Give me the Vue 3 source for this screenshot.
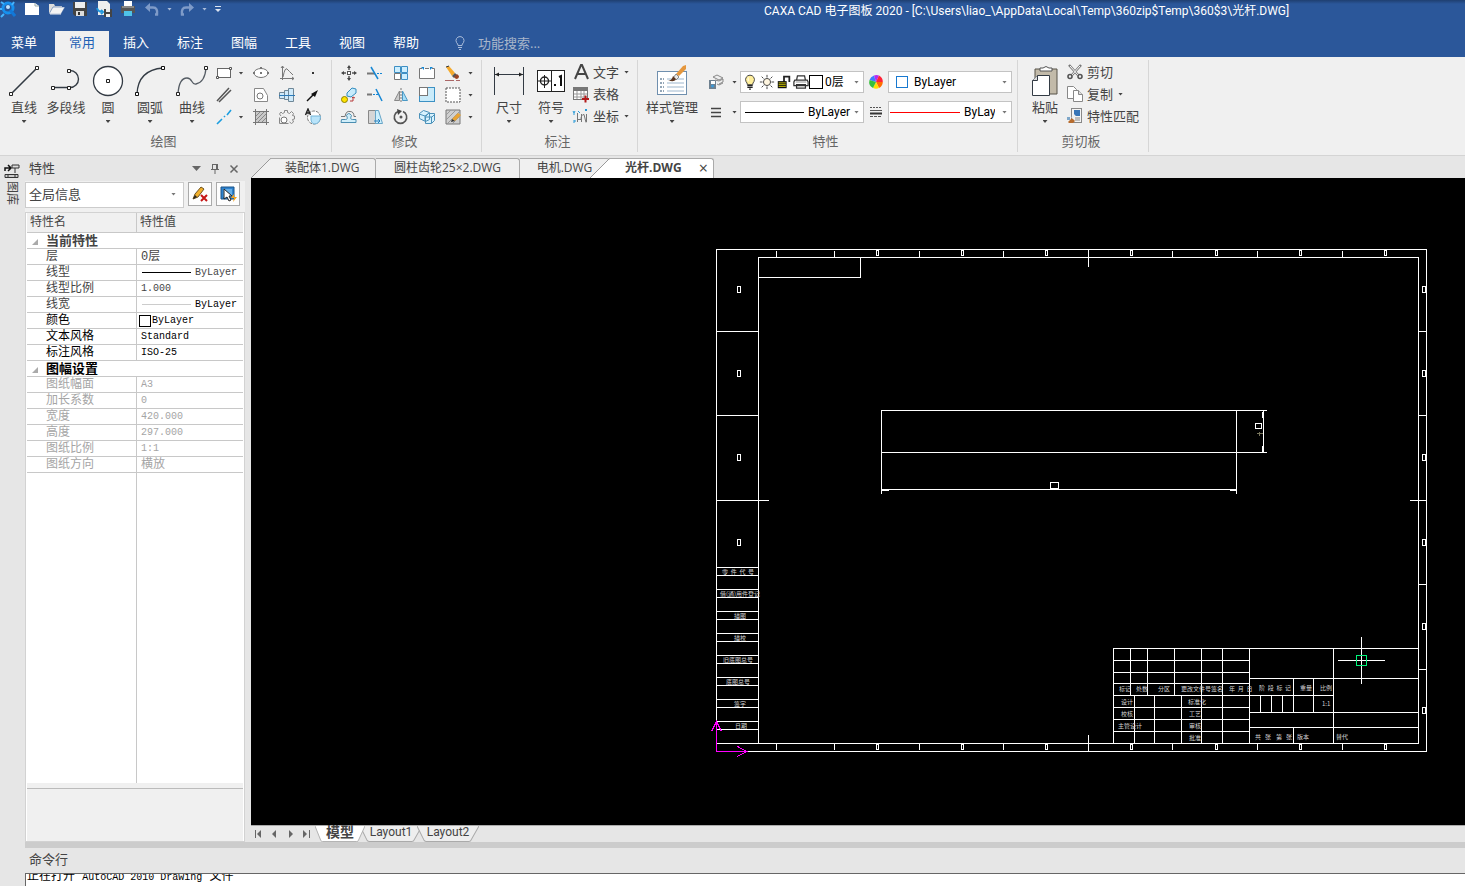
<script setup>
import { ref } from 'vue'

const icons = {
  logo: '<circle cx="8" cy="8" r="5" fill="none" stroke="#1690ee" stroke-width="3"/><path d="M1 2l3 2M14 2l-2 3M2 9H0M4 14l-3 3" stroke="#45b4ff" stroke-width="2"/><path d="M10 10l5 6" stroke="#1278d8" stroke-width="3"/><circle cx="8" cy="7" r="2" fill="#bfe3ff"/>',
  newdoc: '<path d="M2 3h10l4 3v9H2z" fill="#fff"/><path d="M12 3v3h4" fill="none" stroke="#9aa"/>',
  open: '<path d="M2 14V4h5l1 2h7v2" fill="#ddd"/><path d="M2 14l4-7h12l-4 7z" fill="#f3f3f3" stroke="#2b579a" stroke-width=".5"/><path d="M3 14h11" stroke="#eee"/>',
  save: '<path d="M2 2h14v14H4l-2-2z" fill="#444"/><rect x="4" y="2" width="10" height="6" fill="#eee"/><path d="M5 16v-5h8v5" fill="#ddd"/><rect x="7" y="12" width="2" height="3" fill="#333"/>',
  saveas: '<path d="M3 1h9l3 3v11H3z" fill="#eee"/><path d="M2 8q1 4 6 4m-2-2l2 2-2 2" stroke="#2196dd" stroke-width="2" fill="none"/><path d="M9 9h8v8H9z" fill="#444"/><path d="M11 9h4v3h-4zM11 14h4v3h-4z" fill="#eee"/>',
  print: '<path d="M5 1h8v5H5z" fill="#fff"/><rect x="2" y="6" width="14" height="7" fill="#555"/><path d="M5 11h8v5H5z" fill="#4fc3e8"/><path d="M3 7h12" stroke="#bbb"/>',
  undo: '<path d="M7 3L2 7.500 7 12z" fill="#7f9bc8"/><path d="M5 7.500h5q5 0 4 7h-2" fill="none" stroke="#7f9bc8" stroke-width="2.500"/>',
  redo: '<path d="M11 3l5 4.500L11 12z" fill="#7f9bc8"/><path d="M13 7.500H8q-5 0-4 7h2" fill="none" stroke="#7f9bc8" stroke-width="2.500"/>',
  rect: '<rect x="2.5" y="4.500" width="13" height="9" fill="#fff" stroke="#666"/><path d="M1.500 12.500h2v2h-2zM14.500 3.500h2v2h-2z" fill="#fff" stroke="#555"/>',
  ellipse: '<ellipse cx="9" cy="9" rx="7" ry="4.500" fill="#fff" stroke="#777"/><path d="M1 8h2v2H1zM15 8h2v2h-2zM8 3h2v2H8zM8 8h2v2H8z" fill="#777"/>',
  curve: '<path d="M4.500 2v14M2 14.500h14" stroke="#777" fill="none"/><path d="M5 13Q7 3 9 5t6 6" stroke="#777" fill="none"/><path d="M3 4l1.500-2L6 4M14 13l2 1.500-2 1.500" fill="none" stroke="#777"/>',
  point: '<rect x="8" y="8" width="2" height="2" fill="#333"/>',
  parallel: '<path d="M2 15L14 2M4 16L16 4" stroke="#555" stroke-width="1.5"/>',
  poly: '<path d="M2.500 2.500h9l4 7v6h-13z" fill="#fff" stroke="#888"/><circle cx="8" cy="10" r="3" fill="#fff" stroke="#777"/>',
  shaft: '<path d="M1.500 6.500h5v6h-5zM6.500 4.500h4v9h-4zM10.500 2.500h5v13h-5z" fill="#cfeafa" stroke="#6f8797"/><path d="M1 9.500h16" stroke="#2a79b8"/>',
  leader: '<path d="M3 15l7-7" stroke="#111" stroke-width="1.5"/><path d="M14 4L7 8l4 3z" fill="#111"/>',
  axis: '<path d="M2 16l5-5M9 9l1-1M12 7l4-5" stroke="#1c9ee0" stroke-width="1.6"/>',
  hatch: '<path d="M3.500 1v16M14.500 1v16M1 3.500h16M1 14.500h16" stroke="#777"/><rect x="4" y="4" width="10" height="10" fill="#c9c9c9"/><path d="M4 8l4-4M4 12l8-8M6 14l8-8M10 14l4-4" stroke="#888"/>',
  gear: '<path d="M4.500 5.500l2-1V2.500h3v2l2 1 2-2 2 2-1 2 2 .5v3l-2 .5 1 2.500-2 1.500-2-1.500" fill="none" stroke="#888"/><path d="M4.500 5.500L3 4 1.500 6l1.500 2M1.500 9.500v6h9" fill="none" stroke="#888"/><circle cx="6" cy="12" r="3" fill="#fff" stroke="#777"/>',
  acircle: '<circle cx="10" cy="9.500" r="6.500" fill="#fff" stroke="#777" stroke-dasharray="3 1"/><path d="M7 8h9.500q0 8-6.500 8-3-1-3-4z" fill="#b9e4fa" stroke="#77b6d8"/><path d="M1.500 7L4 1l2.500 6M2.500 5h3" fill="none" stroke="#222" stroke-width="1.400"/>',
  move: '<path d="M9 3v3M9 12v3M3 9h3M12 9h3" stroke="#555" stroke-width="1.5"/><path d="M7 4l2-3 2 3zM7 14l2 3 2-3zM4 7L1 9l3 2zM14 7l3 2-3 2z" fill="#444"/><rect x="7.500" y="7.500" width="3" height="3" fill="#fff" stroke="#555"/>',
  trim: '<path d="M1 9.500h8" stroke="#777" stroke-width="2"/><path d="M5 3l7 12" stroke="#1687d4" stroke-width="1.5"/><path d="M11 9.500h6" stroke="#1687d4" stroke-dasharray="2 1"/>',
  array: '<path d="M2.500 2.500h6v6h-6zM9.500 2.500h6v6h-6zM9.500 9.500h6v6h-6z" fill="#cdeefe" stroke="#3d8fc4"/><path d="M2.500 9.500h6v6h-6z" fill="#fff" stroke="#777"/>',
  breakit: '<path d="M4 4.500H1.500v10h15v-10H14M7 4.500h4" fill="#fff" stroke="#777"/><path d="M3 3h3v3zM15 3h-3v3z" fill="#1687d4"/>',
  erase: '<path d="M2 3l3-1 6 7-3 3z" fill="#f5aa2d"/><path d="M2 3l3-1" stroke="#333"/><path d="M8 12l3-3 2 2-3 3z" fill="#555"/><path d="M10 13l3-3 2 2q0 3-3 3z" fill="#9b4423"/><path d="M1 16.500h9M12 16.500h4" stroke="#a66"/>',
  copyobj: '<path d="M7 7l5-5 4 1v4l-5 4-4-1z" fill="#c7ebfb" stroke="#328dc0"/><circle cx="4.500" cy="13.500" r="3" fill="#ffe300" stroke="#8d8100"/><path d="M10 15h3v-4m-1 1l1-1 2 1" fill="none" stroke="#b53737"/>',
  extend: '<path d="M1 8.500h5" stroke="#777" stroke-width="2"/><path d="M7 8.500h5" stroke="#1687d4" stroke-dasharray="2 1"/><path d="M10 3l6 12" stroke="#1687d4" stroke-width="1.500"/>',
  mirror: '<path d="M7.500 5v9.500h-5z" fill="#ccc" stroke="#888"/><path d="M10.500 5v9.500h5z" fill="#a7def8" stroke="#4998c5"/><path d="M9 2v14" stroke="#777" stroke-dasharray="2 1"/>',
  scale: '<rect x="1.500" y="1.500" width="15" height="14" fill="#c9ebfa" stroke="#3c91c4"/><rect x="1.500" y="1.500" width="8" height="8" fill="#fff" stroke="#777"/>',
  selrect: '<rect x="2" y="2" width="14" height="14" fill="#fff" stroke="#555" stroke-dasharray="2 1"/>',
  offset: '<path d="M1.500 11.500h4q3 0 1-4 2-4 5 0-2 4 1 4h3.500v3h-15z" fill="#d0eefa" stroke="#4b8eb1"/><path d="M1 8.500h4q1-6 5-5 4 0 4 5h2" fill="none" stroke="#777"/>',
  stretch: '<path d="M2.500 2.500h8v13h-8z" fill="#d6d6d6" stroke="#888"/><path d="M9.500 2.500h3l4 13h-7z" fill="#cceffd" stroke="#68a5c7"/><path d="M8 13h6m-2-2l2 2-2 2" fill="none" stroke="#287fbd"/>',
  rotate: '<path d="M6 3.500a6.200 6.200 0 1 0 5 0" fill="none" stroke="#555" stroke-width="1.6"/><path d="M5 1l5 2-4 4z" fill="#444"/><circle cx="9" cy="9" r="1.500" fill="#555"/>',
  blocks: '<path d="M1.500 5.500l4-3 6 2v7l-4 2-6-3zM7.500 8.500l3-3h6v7l-3 3h-6z" fill="#d8f2fd" stroke="#4b91b9"/><path d="M1 6l6 2 4-3M7 8v5M8 9h6l3-3M13.500 9v6" fill="none" stroke="#4b91b9"/>',
  edith: '<path d="M2 2h14v14H2z" fill="#cfcfcf" stroke="#777"/><path d="M2 7l5-5M2 12L12 2M3 16L16 3M8 16l8-8" stroke="#999"/><path d="M8 11l6-6 3 2-6 6z" fill="#e8a333"/><path d="M7 14l1-3 3 2z" fill="#333"/>',
  A: '<path d="M3 16L9 2h1l6 14M5 11h9" fill="none" stroke="#444" stroke-width="2"/>',
  table: '<rect x="1.500" y="2.500" width="14" height="12" fill="#fff" stroke="#777"/><rect x="1" y="2" width="15" height="4" fill="#777"/><path d="M2 9h13M2 12h13M5 6v8M9 6v8M12 6v8" stroke="#999"/><path d="M10 14h7M13.500 10.500v7" stroke="#b21b1b" stroke-width="2"/>',
  coord: '<path d="M5.500 6v9M5 12.500h4q0-5 3-5l2 8M9.500 7v8M14.500 7v8" stroke="#777" fill="none"/><path d="M1 4l1 2 1-2M2 6v2M6 4l2 2M13 2l2 2m0-2l-2 2M2 14h2m-2-1v3" stroke="#269ad8" fill="none"/>',
  match: '<rect x="5.500" y="1.500" width="10" height="14" fill="#f4f4f4" stroke="#888"/><rect x="8" y="3" width="6" height="6" fill="#3976b8"/><path d="M9 11h5M9 13h5" stroke="#888"/><path d="M1 10h3v3H1z" fill="#7fa7c9"/><path d="M2 15l4-4 3 3-2 2H3z" fill="#b76c2e"/><path d="M6 11l3-3" stroke="#eee" stroke-width="2"/>',
  cut: '<path d="M3 2l9 10M15 2L6 12" stroke="#777" stroke-width="2.500"/><path d="M4 3l8 9M14 3l-8 9" stroke="#fff"/><circle cx="4" cy="13.500" r="2" fill="none" stroke="#555" stroke-width="1.600"/><circle cx="14" cy="13.500" r="2" fill="none" stroke="#555" stroke-width="1.600"/>',
  copy: '<path d="M1.500 1.500h6l3 3v9h-9z" fill="#fff" stroke="#888"/><path d="M7.500 5.500h5l4 4v7h-9z" fill="#fff" stroke="#888"/><path d="M12.500 5.500v4h4" fill="#ddd" stroke="#888"/>',
  layers: '<path d="M2 7h7v9H2z" fill="#6f8190"/><path d="M4 8h4v3H4z" fill="#fff"/><circle cx="5.500" cy="13" r="1.500" fill="#3d9ad9"/><path d="M6 4l4-2 6 3-4 2zM8 7l4 1 4-2v3l-4 2M10 11l2 1 4-2" fill="#eee" stroke="#888"/>',
  lines: '<path d="M4 5.500h10M4 9.500h10M4 13.500h10" stroke="#444" stroke-width="1.500"/>',
  hatchlines: '<path d="M3 4.500h12" stroke="#555" stroke-dasharray="2 1"/><path d="M3 7.500h12" stroke="#555"/><path d="M3 10.500h12" stroke="#333" stroke-width="2"/><path d="M3 13.500h12" stroke="#555" stroke-dasharray="3 1"/>',
  wheel: '<path d="M9 9L2.500 7A7 7 0 0 1 7 2.500z" fill="#3b7cff"/><path d="M9 9L7 2.500a7 7 0 0 1 5 0z" fill="#b32cf2"/><path d="M9 9l3-6.500A7 7 0 0 1 15.800 9z" fill="#ff2338"/><path d="M9 9h6.800A7 7 0 0 1 12 15z" fill="#ff6d00"/><path d="M9 9l3 6a7 7 0 0 1-6 0z" fill="#ffe000"/><path d="M9 9l-3 6a7 7 0 0 1-3.500-8z" fill="#35c03b"/>',
  bulb: '<path d="M6 12Q6 10 4.500 8.500a5 5 0 1 1 9 0Q12 10 12 12z" fill="#ffef9c" stroke="#333"/><path d="M7 4v4" stroke="#fff"/><path d="M6 13h6M6 15h6M8 17h2" stroke="#222" stroke-width="1.500"/>',
  sun: '<circle cx="9" cy="9" r="4" fill="#fff6e0" stroke="#333"/><path d="M9 1v3M9 14v3M1 9h3M14 9h3M3 3l2 2M13 13l2 2M15 3l-2 2M5 13l-2 2" stroke="#333"/>',
  lock: '<path d="M9 9V3h6v6" fill="none" stroke="#222" stroke-width="2"/><path d="M2 8h10v8H2z" fill="#111"/><path d="M3 10h8M3 12h8M3 14h8" stroke="#d2c900"/>',
  printer: '<path d="M5 2h8l1 5H4zM2 7h14l1 2v4H1V9zM4 12h10v4H4z" fill="#fff" stroke="#333" stroke-width="1.400"/><path d="M3 9h12" stroke="#888"/>',
  pencilx: '<path d="M2 14l2-5 6-7 3 2-6 8z" fill="#f2b02b" stroke="#6d5322"/><path d="M2 14l2-4 2 2z" fill="#222"/><path d="M10 10l6 6m0-6l-6 6" stroke="#c51616" stroke-width="2"/>',
  pick: '<path d="M2 2h13v12H2z" fill="#2d82cf" stroke="#1b5287"/><path d="M4 4h9v8H4z" fill="#65aee8"/><path d="M5 4v10l3-2 2 4 2-1-2-4h3z" fill="#fff" stroke="#222"/><path d="M15 9l-3 4h3l-1 4 4-5h-3z" fill="#f5a21b"/>',
}

const big = {
  line: '<path d="M3 29L29 3" stroke="#333b44" stroke-width="1.600"/><path d="M1.500 27.500h3v3h-3zM27.500 1.500h3v3h-3z" fill="#fff" stroke="#222"/>',
  pline: '<path d="M3 22.500h17a8.500 8.500 0 0 0 0-17" fill="none" stroke="#333b44" stroke-width="1.400"/><path d="M1.500 21.500h3v3h-3zM17.500 21.500h3v3h-3zM17.500 4.500h3v3h-3z" fill="#fff" stroke="#222"/>',
  circle: '<circle cx="16" cy="16" r="14.500" fill="#fff" stroke="#333b44" stroke-width="1.300"/><path d="M14.500 14.500h3v3h-3z" fill="#fff" stroke="#222"/>',
  arc: '<path d="M3 29Q4 5 29 3" fill="none" stroke="#333b44" stroke-width="1.300"/><path d="M1.500 27.500h3v3h-3zM27.500 1.500h3v3h-3z" fill="#fff" stroke="#111"/>',
  spline: '<path d="M2 29Q3 13 11 13C17 13 15 20 20 19Q29 17 30 3" fill="none" stroke="#555c64" stroke-width="1.300"/><path d="M.5 27.500h3v3h-3zM28.500 1.500h3v3h-3z" fill="#fff" stroke="#222"/>',
  dim: '<path d="M1.500 2v28M30.500 2v28M2 9.500h28" stroke="#333b44"/><path d="M2 9.500l4-2v4zM30 9.500l-4-2v4z" fill="#222"/>',
  symbol: '<rect x="2.500" y="5.500" width="27" height="21" fill="#fff" stroke="#222"/><path d="M16.500 5v22M3 16h13M9.500 10v13" stroke="#222"/><circle cx="9.500" cy="16" r="4" fill="none" stroke="#222" stroke-width="1.400"/><path d="M20 21v-2M24 12l2-1v10" stroke="#111" stroke-width="2" fill="none"/>',
  style: '<rect x="1.500" y="6.500" width="29" height="23" fill="#fff" stroke="#6f8fae"/><path d="M4 14h4M4 18h4M4 22h4M4 26h4" stroke="#2b4e70" stroke-dasharray="2 1"/><path d="M11 14h17M11 18h17M11 22h17M11 26h17" stroke="#9db6cd"/><path d="M20 9l7-8 3-1v4l-7 7z" fill="#e5973d"/><path d="M20 9l3 3-3 3-3-2z" fill="#e8e8e8" stroke="#888"/><path d="M12 15q4 1 5-4l3 3q-2 4-8 1z" fill="#5a3520"/>',
  paste: '<path d="M6 4h22v25H6z" fill="#c2baa9" stroke="#575349"/><path d="M11 5V3h3q3-3 6 0h3v3H11z" fill="#fff" stroke="#555"/><path d="M8.500 10.500h12v20h-17v-15z" fill="#fff" stroke="#333b44"/><path d="M8.500 10.500v5h-5" fill="#ddd" stroke="#333b44"/>',
}

const quick = ['newdoc', 'open', 'save', 'saveas', 'print']
const menus = ['常用', '插入', '标注', '图幅', '工具', '视图', '帮助']
const activeMenu = ref('常用')
const drawBig = [['line', '直线'], ['pline', '多段线'], ['circle', '圆'], ['arc', '圆弧'], ['spline', '曲线']]
const drawSmall = [
  ['rect', 'v', 'ellipse', 'curve', 'point'],
  ['parallel', '', 'poly', 'shaft', 'leader'],
  ['axis', 'v', 'hatch', 'gear', 'acircle'],
].flat()
const editSmall = [
  ['move', 'trim', 'array', 'breakit', 'erase', 'v'],
  ['copyobj', 'extend', 'mirror', 'scale', 'selrect', 'v'],
  ['offset', 'stretch', 'rotate', 'blocks', 'edith', 'v'],
].flat()
const noteTools = [['A', '文字', true], ['table', '表格', false], ['coord', '坐标', true]]
const clipTools = [['cut', '剪切', false], ['copy', '复制', true], ['match', '特性匹配', false]]

const groups = [
  { title: '当前特性', rows: [
    { k: '层', v: '0层', cjk: true }, { k: '线型', v: 'ByLayer', line: '#000' }, { k: '线型比例', v: '1.000' },
    { k: '线宽', v: 'ByLayer', line: '#ccc', dark: true }, { k: '颜色', v: 'ByLayer', box: true, strong: true },
    { k: '文本风格', v: 'Standard', strong: true }, { k: '标注风格', v: 'ISO-25', strong: true },
  ] },
  { title: '图幅设置', off: true, rows: [
    { k: '图纸幅面', v: 'A3' }, { k: '加长系数', v: '0' }, { k: '宽度', v: '420.000' },
    { k: '高度', v: '297.000' }, { k: '图纸比例', v: '1:1' }, { k: '图纸方向', v: '横放', cjk: true },
  ] },
]

const docs = [
  { n: '装配体1.DWG', c: 'first' }, { n: '圆柱齿轮25×2.DWG', c: 'second' },
  { n: '电机.DWG', c: 'third' }, { n: '光杆.DWG', c: 'current' },
]

const topTicks = [776, 834, 919, 1003, 1172, 1257, 1342]
const topBoxes = [877, 962, 1046, 1131, 1216, 1300, 1385]
const sideTicks = [331, 415, 584, 669]
const sideBoxes = [289, 373, 457, 542, 626, 710]
const stubs = [
  [567, 722, '零\u00a0\u00a0件\u00a0\u00a0代\u00a0\u00a0号'], [589, 720, '借(通)用件登记'], [611, 734, '描图'], [633, 734, '描校'],
  [655, 723, '旧底图总号'], [677, 726, '底图总号'], [699, 734, '签字'], [721, 735, '日期'],
]
const blockText = [
  [1119, 691, '标记'], [1136, 691, '处数'], [1158, 691, '分区'], [1181, 691, '更改文件号签名'], [1229, 691, '年\u00a0\u00a0月\u00a0\u00a0日'],
  [1259, 690, '阶\u00a0\u00a0段\u00a0\u00a0标\u00a0\u00a0记'], [1300, 690, '重量'], [1320, 690, '比例'], [1121, 704, '设计'], [1188, 704, '标准化'],
  [1121, 716, '校核'], [1189, 716, '工艺'], [1118, 728, '主管设计'], [1189, 728, '审核'], [1189, 740, '批准'],
  [1322, 706, '1:1'], [1255, 739, '共\u00a0\u00a0\u00a0张'], [1276, 739, '第\u00a0\u00a0\u00a0张'], [1297, 739, '版本'], [1336, 739, '替代'],
]
</script>

<template>
  <div class="app">
    <header>
      <div class="titlebar">
        <div class="quick">
          <svg class="logo" viewBox="0 0 16 18" v-html="icons.logo"></svg>
          <button v-for="q in quick" :key="q" :aria-label="q"><svg viewBox="0 0 18 18" v-html="icons[q]"></svg></button>
          <button aria-label="撤消"><svg viewBox="0 0 18 18" v-html="icons.undo"></svg></button><i class="tri pale"></i>
          <button class="redo" aria-label="恢复"><svg viewBox="0 0 18 18" v-html="icons.redo"></svg></button><i class="tri pale"></i>
          <svg class="more" viewBox="0 0 6 8"><path d="M0 1.500h6" stroke="#dde5f2" /><path d="M0 4h6L3 7z" fill="#dde5f2" /></svg>
        </div>
        <h1>CAXA CAD 电子图板 2020 - [C:\Users\liao_\AppData\Local\Temp\360zip$Temp\360$3\光杆.DWG]</h1>
      </div>
      <nav class="menu">
        <button class="main">菜单</button>
        <button v-for="m in menus" :key="m" :class="{ on: m === activeMenu }" @click="activeMenu = m">{{ m }}</button>
        <label class="search">
          <svg viewBox="0 0 12 14"><path d="M4 9.500Q4 8 2.500 6.500a4 4 0 1 1 7 0Q8 8 8 9.500zM4 11.500h4M5 13.500h2" fill="none" stroke="#a9bbd9" /></svg>
          <input aria-label="功能搜索" placeholder="功能搜索..." />
        </label>
      </nav>
    </header>

    <section class="ribbon">
      <div class="group g-draw">
        <div class="tools">
          <button v-for="b in drawBig" :key="b[0]" class="big">
            <svg viewBox="0 0 32 32" v-html="big[b[0]]"></svg><span>{{ b[1] }}</span><i v-if="b[0] !== 'pline'" class="tri"></i>
          </button>
          <div class="grid grid-draw">
            <template v-for="(s, i) in drawSmall" :key="i">
              <span v-if="s === 'v' || !s" class="cell"><i v-if="s" class="tri"></i></span>
              <button v-else class="cell" :aria-label="s"><svg viewBox="0 0 18 18" v-html="icons[s]"></svg></button>
            </template>
          </div>
        </div>
        <h2>绘图</h2>
      </div>
      <div class="group g-edit">
        <div class="tools">
          <div class="grid grid-edit">
            <template v-for="(s, i) in editSmall" :key="i">
              <span v-if="s === 'v'" class="cell"><i class="tri"></i></span>
              <button v-else class="cell" :aria-label="s"><svg viewBox="0 0 18 18" v-html="icons[s]"></svg></button>
            </template>
          </div>
        </div>
        <h2>修改</h2>
      </div>
      <div class="group g-note">
        <div class="tools">
          <button class="big"><svg viewBox="0 0 32 32" v-html="big.dim"></svg><span>尺寸</span><i class="tri"></i></button>
          <button class="big"><svg viewBox="0 0 32 32" v-html="big.symbol"></svg><span>符号</span><i class="tri"></i></button>
          <div class="list">
            <button v-for="t in noteTools" :key="t[0]"><svg viewBox="0 0 18 18" v-html="icons[t[0]]"></svg>{{ t[1] }}<i v-if="t[2]" class="tri"></i></button>
          </div>
        </div>
        <h2>标注</h2>
      </div>
      <div class="group g-prop">
        <div class="tools">
          <button class="big wide"><svg viewBox="0 0 32 32" v-html="big.style"></svg><span>样式管理</span><i class="tri"></i></button>
          <div class="combos">
            <button class="cell" aria-label="图层"><svg viewBox="0 0 18 18" v-html="icons.layers"></svg><i class="tri"></i></button>
            <div class="combo">
              <svg v-for="n in ['bulb', 'sun', 'lock', 'printer']" :key="n" viewBox="0 0 18 18" v-html="icons[n]"></svg>
              <i class="swatch"></i>
              <select aria-label="当前层"><option>0层</option></select><i class="tri gray"></i>
            </div>
            <button class="cell" aria-label="颜色"><svg viewBox="0 0 18 18" v-html="icons.wheel"></svg></button>
            <div class="combo">
              <i class="swatch blue"></i>
              <select aria-label="颜色"><option>ByLayer</option></select><i class="tri gray"></i>
            </div>
            <button class="cell" aria-label="线宽"><svg viewBox="0 0 18 18" v-html="icons.lines"></svg><i class="tri"></i></button>
            <div class="combo">
              <i class="stroke"></i>
              <select aria-label="线型"><option>ByLayer</option></select><i class="tri gray"></i>
            </div>
            <button class="cell" aria-label="线型"><svg viewBox="0 0 18 18" v-html="icons.hatchlines"></svg></button>
            <div class="combo">
              <i class="stroke red"></i>
              <select aria-label="线宽" class="s-cut"><option>ByLayer</option></select><i class="tri gray"></i>
            </div>
          </div>
        </div>
        <h2>特性</h2>
      </div>
      <div class="group g-clip">
        <div class="tools">
          <button class="big"><svg viewBox="0 0 32 32" v-html="big.paste"></svg><span>粘贴</span><i class="tri"></i></button>
          <div class="list">
            <button v-for="t in clipTools" :key="t[0]"><svg viewBox="0 0 18 18" v-html="icons[t[0]]"></svg>{{ t[1] }}<i v-if="t[2]" class="tri"></i></button>
          </div>
        </div>
        <h2>剪切板</h2>
      </div>
    </section>

    <div class="body">
      <aside class="dock">
        <button>
          <svg viewBox="0 0 16 16"><path d="M1 8V5h5M4 2l3 3-3 3" fill="none" stroke="#111" stroke-width="1.500" /><path d="M8 2h7v3H8zM11 5v5" fill="#ddd" stroke="#333" /><path d="M1 11.500h13v3H1zM4 12v2M11 12v2" fill="#ccc" stroke="#333" /></svg>
          <span>图库</span>
        </button>
      </aside>

      <div class="work">
        <div class="upper">
          <section class="panel">
            <div class="panel-head">
              <h3>特性</h3>
              <i class="caret"></i>
              <button aria-label="固定"><svg viewBox="0 0 10 12"><path d="M2.500 1v5M7.500 1v5M2 1.500h6M1 6.500h8M5 7v4M6.500 1v5" fill="none" stroke="#666" /></svg></button>
              <button aria-label="关闭"><svg viewBox="0 0 10 12"><path d="M1.500 2.500l7 7m0-7l-7 7" stroke="#666" stroke-width="1.500" /></svg></button>
            </div>
            <div class="pick">
              <div class="scope"><select aria-label="选择对象"><option>全局信息</option></select><i class="tri gray"></i></div>
              <button aria-label="清除选择"><svg viewBox="0 0 18 18" v-html="icons.pencilx"></svg></button>
              <button aria-label="快速选择"><svg viewBox="0 0 18 18" v-html="icons.pick"></svg></button>
            </div>
            <div class="props">
              <table>
                <thead><tr><th>特性名</th><th>特性值</th></tr></thead>
                <tbody v-for="g in groups" :key="g.title" :class="{ off: g.off }">
                  <tr class="cat"><td colspan="2"><svg viewBox="0 0 6 6"><path d="M6 0v6H0z" fill="#aaa" /></svg>{{ g.title }}</td></tr>
                  <tr v-for="r in g.rows" :key="r.k" :class="{ strong: r.strong }">
                    <td>{{ r.k }}</td>
                    <td :class="{ mono: !r.cjk, dark: r.dark, boxed: r.box }">
                      <div><i v-if="r.line" class="sample" :style="{ background: r.line }"></i><i v-if="r.box" class="box"></i>{{ r.v }}</div>
                    </td>
                  </tr>
                </tbody>
              </table>
              <div class="rest"></div>
              <div class="hint"></div>
            </div>
          </section>

          <main>
            <div class="docs">
              <button v-for="d in docs" :key="d.n" :class="d.c">
                <svg v-if="d.c === 'first' || d.c === 'current'" viewBox="0 0 20 20"><path d="M0 20L18 2q2-1.500 2-1.500V20z" /><path d="M0 20L18 2q1-1.500 2-1.500" class="edge" /></svg>
                {{ d.n }}<span v-if="d.c === 'current'" class="x">×</span>
              </button>
            </div>
            <div class="canvas">
              <svg viewBox="251 178 1214 647" preserveAspectRatio="xMaxYMin meet">
                <g transform="translate(.5 .5)" fill="none" stroke="#fff" shape-rendering="crispEdges">
                  <rect x="716" y="249" width="710" height="502" />
                  <path d="M758 743V257H1418V743M716 743H1418M758 277H860V257" />
                  <path v-for="x in topTicks" :key="x" :d="`M${x} 250v6M${x} 743v6`" />
                  <path d="M1088 249v17M1088 734v17M716 500h52M1409 500h17" />
                  <g v-for="x in topBoxes" :key="x"><rect :x="x - 1" y="250" width="2" height="5" /><rect :x="x - 1" y="744" width="2" height="5" /></g>
                  <path v-for="y in sideTicks" :key="y" :d="`M1418 ${y}h8`" />
                  <path d="M716 331h42M716 415h42" />
                  <g v-for="(y, i) in sideBoxes" :key="y"><rect x="1422" :y="y - 3" width="3" height="6" /><rect v-if="i < 4" x="737" :y="y - 3" width="3" height="6" /></g>
                  <path v-for="s in stubs" :key="s[0]" :d="`M716 ${s[0]}h42M716 ${s[0] + 8}h42`" />

                  <path d="M881 493V410H1266M881 452H1266M1236 410V493M881 489H1236M881 490h7M1229 490h7M1263 410v42M1262 411v6M1262 445v6" />
                  <rect x="1050" y="482" width="8" height="6" /><rect x="1255" y="423" width="6" height="5" />

                  <path d="M1418 648H1113V743M1113 660H1249M1113 672H1249M1113 683H1249M1113 695H1333M1113 707H1249M1113 719H1249M1113 731H1249" />
                  <path d="M1130 648V695M1147 648V695M1174 648V695M1201 648V743M1222 648V743M1249 648V743M1333 648V743M1134 695V743M1154 695V743M1181 695V743" />
                  <path d="M1249 678H1418M1249 712H1418M1249 727H1418M1293 678V712M1313 678V712M1260 695V712M1271 695V712M1282 695V712M1293 727V743" />
                  <path d="M1361 636V683M1337 660H1384" /><rect x="1356" y="655" width="10" height="10" stroke="#00f57a" />
                  <path d="M716 751V721M711 731l5-10 5 10M716 751H746M737 746l9 5-9 5" stroke="#f0f" />
                  <path d="M1256 433h6M1259 431v4" stroke="#77745c" />
                </g>
                <g class="cad-text">
                  <text v-for="s in stubs" :key="s[0]" :x="s[1]" :y="s[0] + 7">{{ s[2] }}</text>
                  <text v-for="(t, i) in blockText" :key="i" :x="t[0]" :y="t[1]">{{ t[2] }}</text>
                </g>
              </svg>
            </div>
            <div class="sheets">
              <button class="nav" aria-label="第一页"><svg viewBox="0 0 10 10"><path d="M1.500 1v8" stroke="#666" /><path d="M7 1v8L3 5z" fill="#666" /></svg></button>
              <button class="nav" aria-label="上一页"><svg viewBox="0 0 10 10"><path d="M6 1v8L2 5z" fill="#666" /></svg></button>
              <button class="nav" aria-label="下一页"><svg viewBox="0 0 10 10"><path d="M3 1v8l4-4z" fill="#666" /></svg></button>
              <button class="nav" aria-label="最后一页"><svg viewBox="0 0 10 10"><path d="M1 1v8l4-4z" fill="#666" /><path d="M7.500 1v8" stroke="#666" /></svg></button>
              <button v-for="(s, i) in ['模型', 'Layout1', 'Layout2']" :key="s" class="sheet" :class="{ sel: i === 0 }">
                <svg viewBox="0 0 60 17" preserveAspectRatio="none"><path d="M0 0L7 15.500Q8 16.500 9 16.500H50Q52 16.500 52 15.500L60 0" /></svg>
                <span>{{ s }}</span>
              </button>
            </div>
          </main>
        </div>
        <div class="splitter"></div>
        <section class="command">
          <h3>命令行</h3>
          <div class="log"><p>正在打开 <span>AutoCAD 2010 Drawing</span> 文件</p></div>
        </section>
      </div>
    </div>
  </div>
</template>

<style>
body { margin: 0; }
</style>

<style scoped>
* { box-sizing: border-box; }
.app { display: flex; flex-direction: column; height: 100vh; overflow: hidden; background: #e6e6e6; color: #444; font: 13px/18px "Open Sans", "Noto Sans CJK SC", sans-serif; }
button { margin: 0; padding: 0; border: 0; background: none; color: inherit; font: inherit; }
h1, h2, h3, p { margin: 0; font-size: 13px; font-weight: 400; }
select, input { margin: 0; padding: 0; border: 0; outline: 0; background: none; color: inherit; font: inherit; }
select { appearance: none; }
svg { display: block; flex: none; }
i { display: block; flex: none; }
.tri { width: 5px; height: 3px; background: #444; clip-path: polygon(0 0, 100% 0, 50% 100%); }
.tri.gray { background: #777; }
.tri.pale { background: #a9bbd9; }

header { background: linear-gradient(#1f3f70, #2b579a 4px); color: #fff; }
.titlebar { display: flex; height: 31px; }
.quick { display: flex; align-items: center; width: 764px; height: 18px; }
.logo { width: 16px; height: 18px; margin-right: 7px; }
.quick button { width: 24px; display: flex; justify-content: flex-start; }
.quick button svg { width: 18px; height: 18px; }
.quick button.redo { margin-left: 6px; }
.quick .more { width: 6px; height: 8px; margin-left: 8px; }
h1 { font: 12px/23px Roboto, "Noto Sans CJK SC", sans-serif; white-space: nowrap; }
.menu { display: flex; height: 26px; }
.menu button { width: 54px; padding-bottom: 3px; line-height: 23px; }
.menu .main { width: 48px; margin-right: 7px; }
.menu .on { background: #f0f0f0; color: #1f62b5; }
.search { display: flex; align-items: center; gap: 12px; margin-left: 21px; padding-bottom: 2px; color: #b5c2d8; }
.search svg { width: 12px; height: 14px; }
.search input { width: 160px; }
.search input::placeholder { color: #a9b6ca; opacity: 1; }

.ribbon { display: flex; height: 99px; padding: 3px 0 3px; background: #f0f0f0; border-bottom: 1px solid #d4d4d4; }
.group { display: flex; flex-direction: column; justify-content: space-between; border-right: 1px solid #d6d6d6; }
.group h2 { color: #666; line-height: 20px; padding: 0 4px 1px 0; text-align: center; }
.tools { display: flex; }
.g-draw { width: 332px; }
.g-draw .tools { padding-left: 3px; }
.g-edit { width: 150px; }
.g-edit .tools { padding-left: 4px; }
.g-note { width: 156px; }
.g-note .tools { padding-left: 6px; }
.g-prop { width: 380px; }
.g-prop .tools { padding-left: 4px; }
.g-clip { width: 131px; }
.g-clip .tools { padding-left: 6px; }
.big { display: flex; flex-direction: column; align-items: center; width: 42px; padding-top: 5px; white-space: nowrap; }
.big svg { width: 32px; height: 32px; }
.big span { line-height: 20px; }
.big .tri { margin-top: 3px; }
.big.wide { width: 60px; }
.grid { display: grid; grid-auto-rows: 22px; padding-top: 2px; }
.grid-draw { grid-template-columns: 20px 14px 26px 26px 26px; }
.grid-draw { margin-left: 1px; }
.grid-edit { grid-template-columns: repeat(5, 26px) 9px; }
.cell { display: flex; align-items: center; justify-content: center; }
.cell svg, .list svg, .combo svg { width: 18px; height: 18px; }
.list { display: grid; grid-auto-rows: 22px; padding-top: 1px; }
.list button { display: flex; align-items: center; gap: 3px; white-space: nowrap; }
.list .tri { margin-left: 2px; }
.combos { display: grid; grid-template-columns: 38px 124px 24px 124px; grid-auto-rows: 22px; row-gap: 8px; padding-top: 11px; }
.combos .cell:has(.tri) { gap: 7px; justify-content: flex-end; padding-right: 3px; }
.combo { display: flex; align-items: center; border: 1px solid #c3c3c3; background: #fff; color: #000; font: 12px/18px Roboto, "Noto Sans CJK SC", sans-serif; padding-right: 4px; }
.combo svg { width: 16px; height: 18px; margin-left: 1px; }
.combo select { flex: 1; min-width: 0; }
.combo .s-cut { margin-right: 7px; text-overflow: clip; }
.swatch { width: 14px; height: 14px; border: 1px solid #000; background: #fff; margin-right: 2px; }
.swatch.blue { width: 12px; height: 12px; margin: 0 6px 0 7px; border-color: #1879d0; }
.stroke { width: 59px; height: 1px; margin: 0 4px; background: #000; }
.stroke.red { width: 70px; margin: 0 4px 0 1px; background: #f00; }

.body { display: flex; flex: 1; min-height: 0; }
.dock { width: 25px; padding: 7px 0 0 4px; }
.dock button { display: block; }
.dock svg { width: 16px; height: 16px; }
.dock span { display: block; width: 16px; writing-mode: vertical-rl; text-orientation: sideways; font-size: 12px; line-height: 16px; margin-top: 2px; }
.work { display: flex; flex: 1; flex-direction: column; min-width: 0; }
.upper { display: flex; flex: 1; min-height: 0; }
.panel { display: flex; flex-direction: column; width: 220px; margin-right: 6px; }
.panel-head { display: flex; align-items: center; height: 25px; padding: 0 6px 0 4px; }
.panel-head h3 { flex: 1; padding-bottom: 1px; }
.panel-head button { margin-left: 9px; }
.panel-head svg { width: 10px; height: 12px; }
.caret { width: 9px; height: 5px; background: #666; clip-path: polygon(0 0, 100% 0, 50% 100%); }
.pick { display: flex; gap: 4px; height: 31px; padding-top: 1px; background: #f0f0f0; }
.pick button { display: flex; align-items: center; justify-content: center; width: 24px; height: 24px; border: 1px solid #aaa; background: #fdfdfd; }
.pick svg { width: 18px; height: 18px; }
.scope { display: flex; align-items: center; width: 159px; height: 26px; padding: 0 7px 2px 3px; border: 1px solid #ccc; background: #fff; }
.scope select { flex: 1; }
.props { display: flex; flex: 1; flex-direction: column; min-height: 0; border: 1px solid #d2d2d2; padding: 0 1px; background: #fff; }
table { width: 100%; border-collapse: separate; border-spacing: 0; table-layout: fixed; font: 12px/15px "Liberation Mono", "Noto Sans CJK SC", monospace; text-align: left; }
th { height: 20px; padding: 2px 0 0 3px; border-bottom: 1px solid #c8c8c8; background: #f0f0f0; font-weight: 400; }
th:first-child { width: 110px; border-right: 1px solid #c8c8c8; }
td { height: 16px; padding: 2px 0 0 4px; border-bottom: 1px solid #c8c8c8; line-height: 13px; white-space: nowrap; }
td:first-child { padding-left: 19px; }
tr:not(.cat) td:first-child { border-right: 1px solid #c8c8c8; }
.cat td { font-size: 13px; font-weight: 700; }
.cat svg { display: inline-block; width: 6px; height: 6px; margin: 0 8px 0 -14px; }
td > div { display: flex; align-items: center; height: 13px; }
td.mono { padding-top: 0; font-size: 10px; }
.mono > div { height: 15px; }
.dark, .strong { color: #000; }
.sample { width: 49px; height: 1px; margin: 0 4px 0 1px; }
.box { width: 12px; height: 12px; margin-right: 1px; border: 1px solid #000; }
td.boxed { padding-left: 2px; }
.off { color: #a5a5a5; }
.off .cat { color: #000; }
.rest { flex: 1; background: linear-gradient(#c8c8c8, #c8c8c8) 109px 0 / 1px 100% no-repeat; }
.hint { height: 58px; border-top: 5px solid #f0f0f0; background: #f0f0f0; box-shadow: inset 0 1px #bbb; }

main { display: flex; flex: 1; flex-direction: column; min-width: 0; }
.docs { display: flex; height: 22px; padding-top: 2px; font-size: 12px; }
.docs button { position: relative; height: 20px; padding-bottom: 1px; border: 1px solid #aaa; border-width: 1px 1px 0 0; border-radius: 0 3px 0 0; background: #f0f0f0; line-height: 18px; white-space: nowrap; }
.docs .first { width: 105px; margin-left: 20px; text-align: left; padding-left: 14px; }
.docs .second { width: 144px; }
.docs .third { width: 90px; }
.docs .current { width: 104px; padding-left: 15px; text-align: left; background: #fff; font-weight: 700; }
.docs svg { position: absolute; right: 100%; top: -1px; width: 20px; height: 20px; fill: #f0f0f0; }
.docs .current svg { fill: #fff; }
.docs .edge { fill: none; stroke: #999; }
.x { float: right; margin-right: 5px; font-size: 16px; font-weight: 400; }
.canvas { flex: 1; min-height: 0; background: #000; }
.canvas svg { width: 100%; height: 100%; }
.cad-text { fill: #d4d4d4; font: 6px "Noto Sans CJK SC", sans-serif; }
.sheets { display: flex; align-items: center; height: 17px; border-top: 1px solid #aaa; font: 12px/14px Roboto, "Noto Sans CJK SC", sans-serif; }
.nav { width: 16px; display: flex; justify-content: center; }
.nav svg { width: 10px; height: 10px; }
.sheet { position: relative; z-index: 1; width: 62px; height: 16px; padding-bottom: 3px; margin-left: -5px; }
.sheet.sel { width: 50px; margin-left: 0; z-index: 2; font-weight: 700; font-size: 14px; }
.sheet svg { position: absolute; inset: 0; width: 100%; height: 16px; fill: #eee; stroke: #aaa; }
.sel svg { fill: #fff; }
.sheet span { position: relative; display: block; line-height: 13px; }
.splitter { height: 6px; background: #ccc; }
.command { display: flex; flex-direction: column; height: 38px; }
.command h3 { padding-left: 4px; line-height: 22px; height: 25px; }
.log { flex: 1; overflow: hidden; border: 1px solid #666; border-width: 1px 0 0 1px; background: #fff; color: #000; }
.log p { margin-top: -5px; padding-left: 1px; font: 12px/16px "Liberation Mono", "Noto Sans CJK SC", monospace; white-space: nowrap; }
.log span { font-size: 10px; }
</style>
